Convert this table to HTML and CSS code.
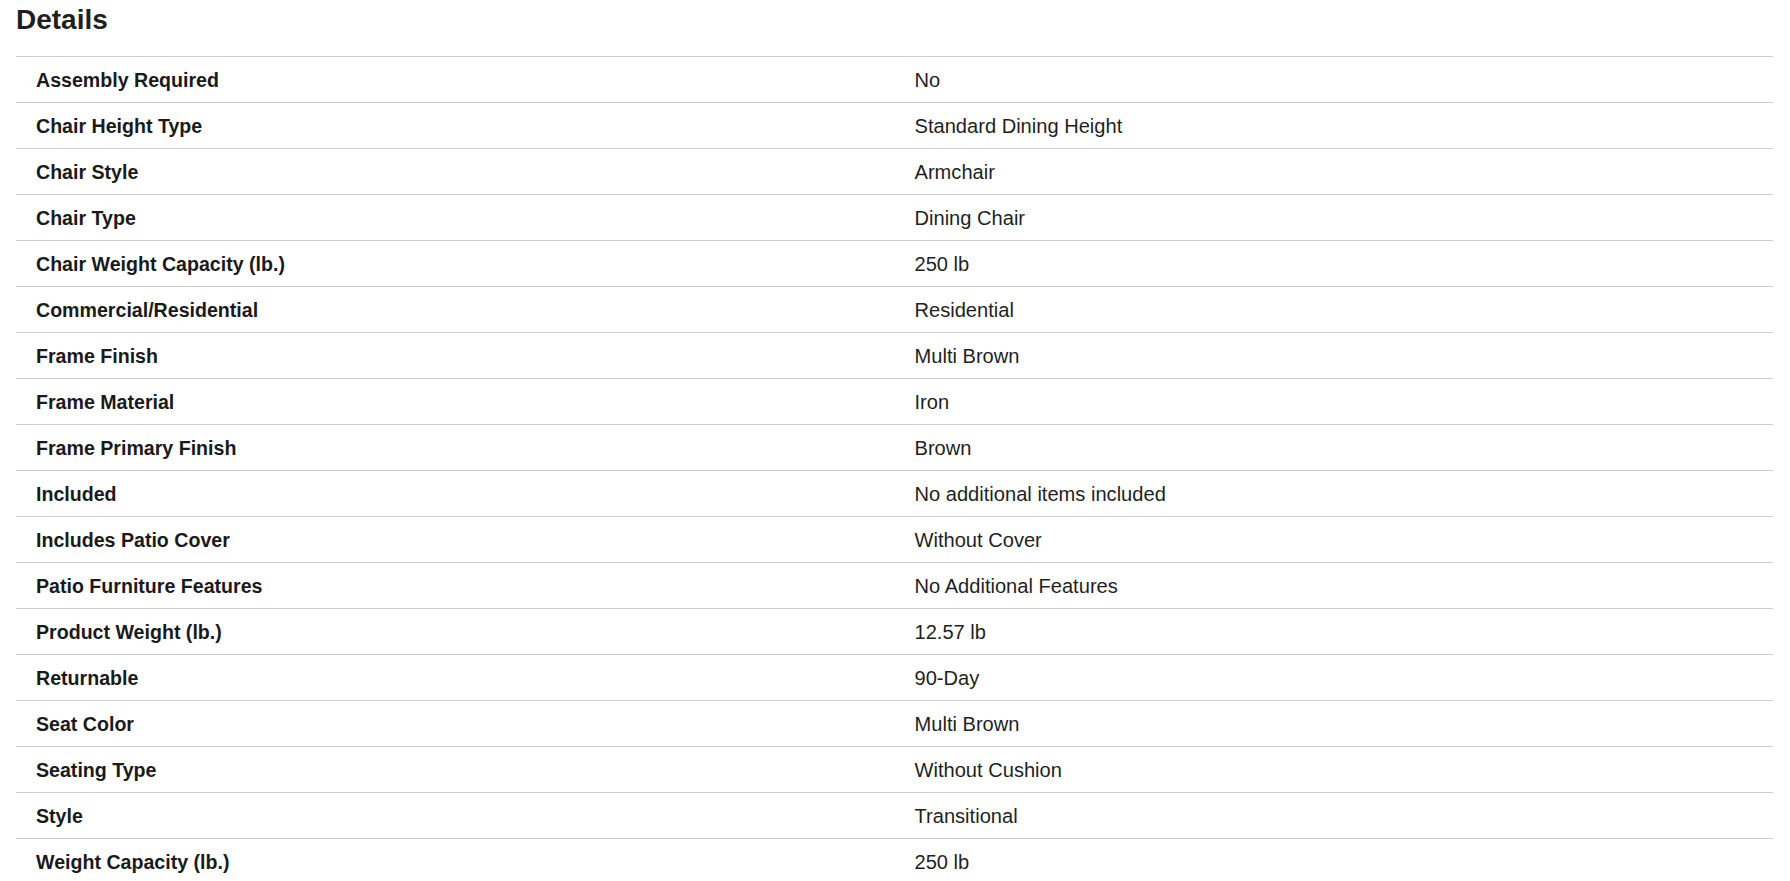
FILE: index.html
```html
<!DOCTYPE html>
<html lang="en">
<head>
<meta charset="utf-8">
<title>Details</title>
<link rel="stylesheet" href="styles.css">
</head>
<body>
<section class="details">
  <h2 class="details-title">Details</h2>
  <div class="spec-table">
    <div class="spec-row"><div class="spec-label">Assembly Required</div><div class="spec-value">No</div></div>
    <div class="spec-row"><div class="spec-label">Chair Height Type</div><div class="spec-value">Standard Dining Height</div></div>
    <div class="spec-row"><div class="spec-label">Chair Style</div><div class="spec-value">Armchair</div></div>
    <div class="spec-row"><div class="spec-label">Chair Type</div><div class="spec-value">Dining Chair</div></div>
    <div class="spec-row"><div class="spec-label">Chair Weight Capacity (lb.)</div><div class="spec-value">250 lb</div></div>
    <div class="spec-row"><div class="spec-label">Commercial/Residential</div><div class="spec-value">Residential</div></div>
    <div class="spec-row"><div class="spec-label">Frame Finish</div><div class="spec-value">Multi Brown</div></div>
    <div class="spec-row"><div class="spec-label">Frame Material</div><div class="spec-value">Iron</div></div>
    <div class="spec-row"><div class="spec-label">Frame Primary Finish</div><div class="spec-value">Brown</div></div>
    <div class="spec-row"><div class="spec-label">Included</div><div class="spec-value">No additional items included</div></div>
    <div class="spec-row"><div class="spec-label">Includes Patio Cover</div><div class="spec-value">Without Cover</div></div>
    <div class="spec-row"><div class="spec-label">Patio Furniture Features</div><div class="spec-value">No Additional Features</div></div>
    <div class="spec-row"><div class="spec-label">Product Weight (lb.)</div><div class="spec-value">12.57 lb</div></div>
    <div class="spec-row"><div class="spec-label">Returnable</div><div class="spec-value">90-Day</div></div>
    <div class="spec-row"><div class="spec-label">Seat Color</div><div class="spec-value">Multi Brown</div></div>
    <div class="spec-row"><div class="spec-label">Seating Type</div><div class="spec-value">Without Cushion</div></div>
    <div class="spec-row"><div class="spec-label">Style</div><div class="spec-value">Transitional</div></div>
    <div class="spec-row"><div class="spec-label">Weight Capacity (lb.)</div><div class="spec-value">250 lb</div></div>
  </div>
</section>
</body>
</html>
```
FILE: styles.css
```css
html, body {
  margin: 0;
  padding: 0;
  background: #ffffff;
}

body {
  font-family: "Liberation Sans", Arial, Helvetica, sans-serif;
  color: #222222;
}

.details {
  padding: 4px 17px 0 16px;
}

.details-title {
  margin: 0 0 20px 0;
  font-size: 28px;
  line-height: 32px;
  font-weight: 700;
  color: #1f1f1f;
}

.spec-table {
  display: flex;
  flex-direction: column;
}

.spec-row {
  display: grid;
  grid-template-columns: 1fr 1fr;
  align-items: center;
  height: 46px;
  padding-top: 2px;
  box-sizing: border-box;
  border-top: 1px solid #cccccc;
}

.spec-label {
  padding-left: 20px;
  font-size: 19.6px;
  font-weight: 700;
  color: #1a1a1a;
}

.spec-value {
  padding-left: 20px;
  font-size: 20.1px;
  font-weight: 400;
  color: #1f1f1f;
}
```
